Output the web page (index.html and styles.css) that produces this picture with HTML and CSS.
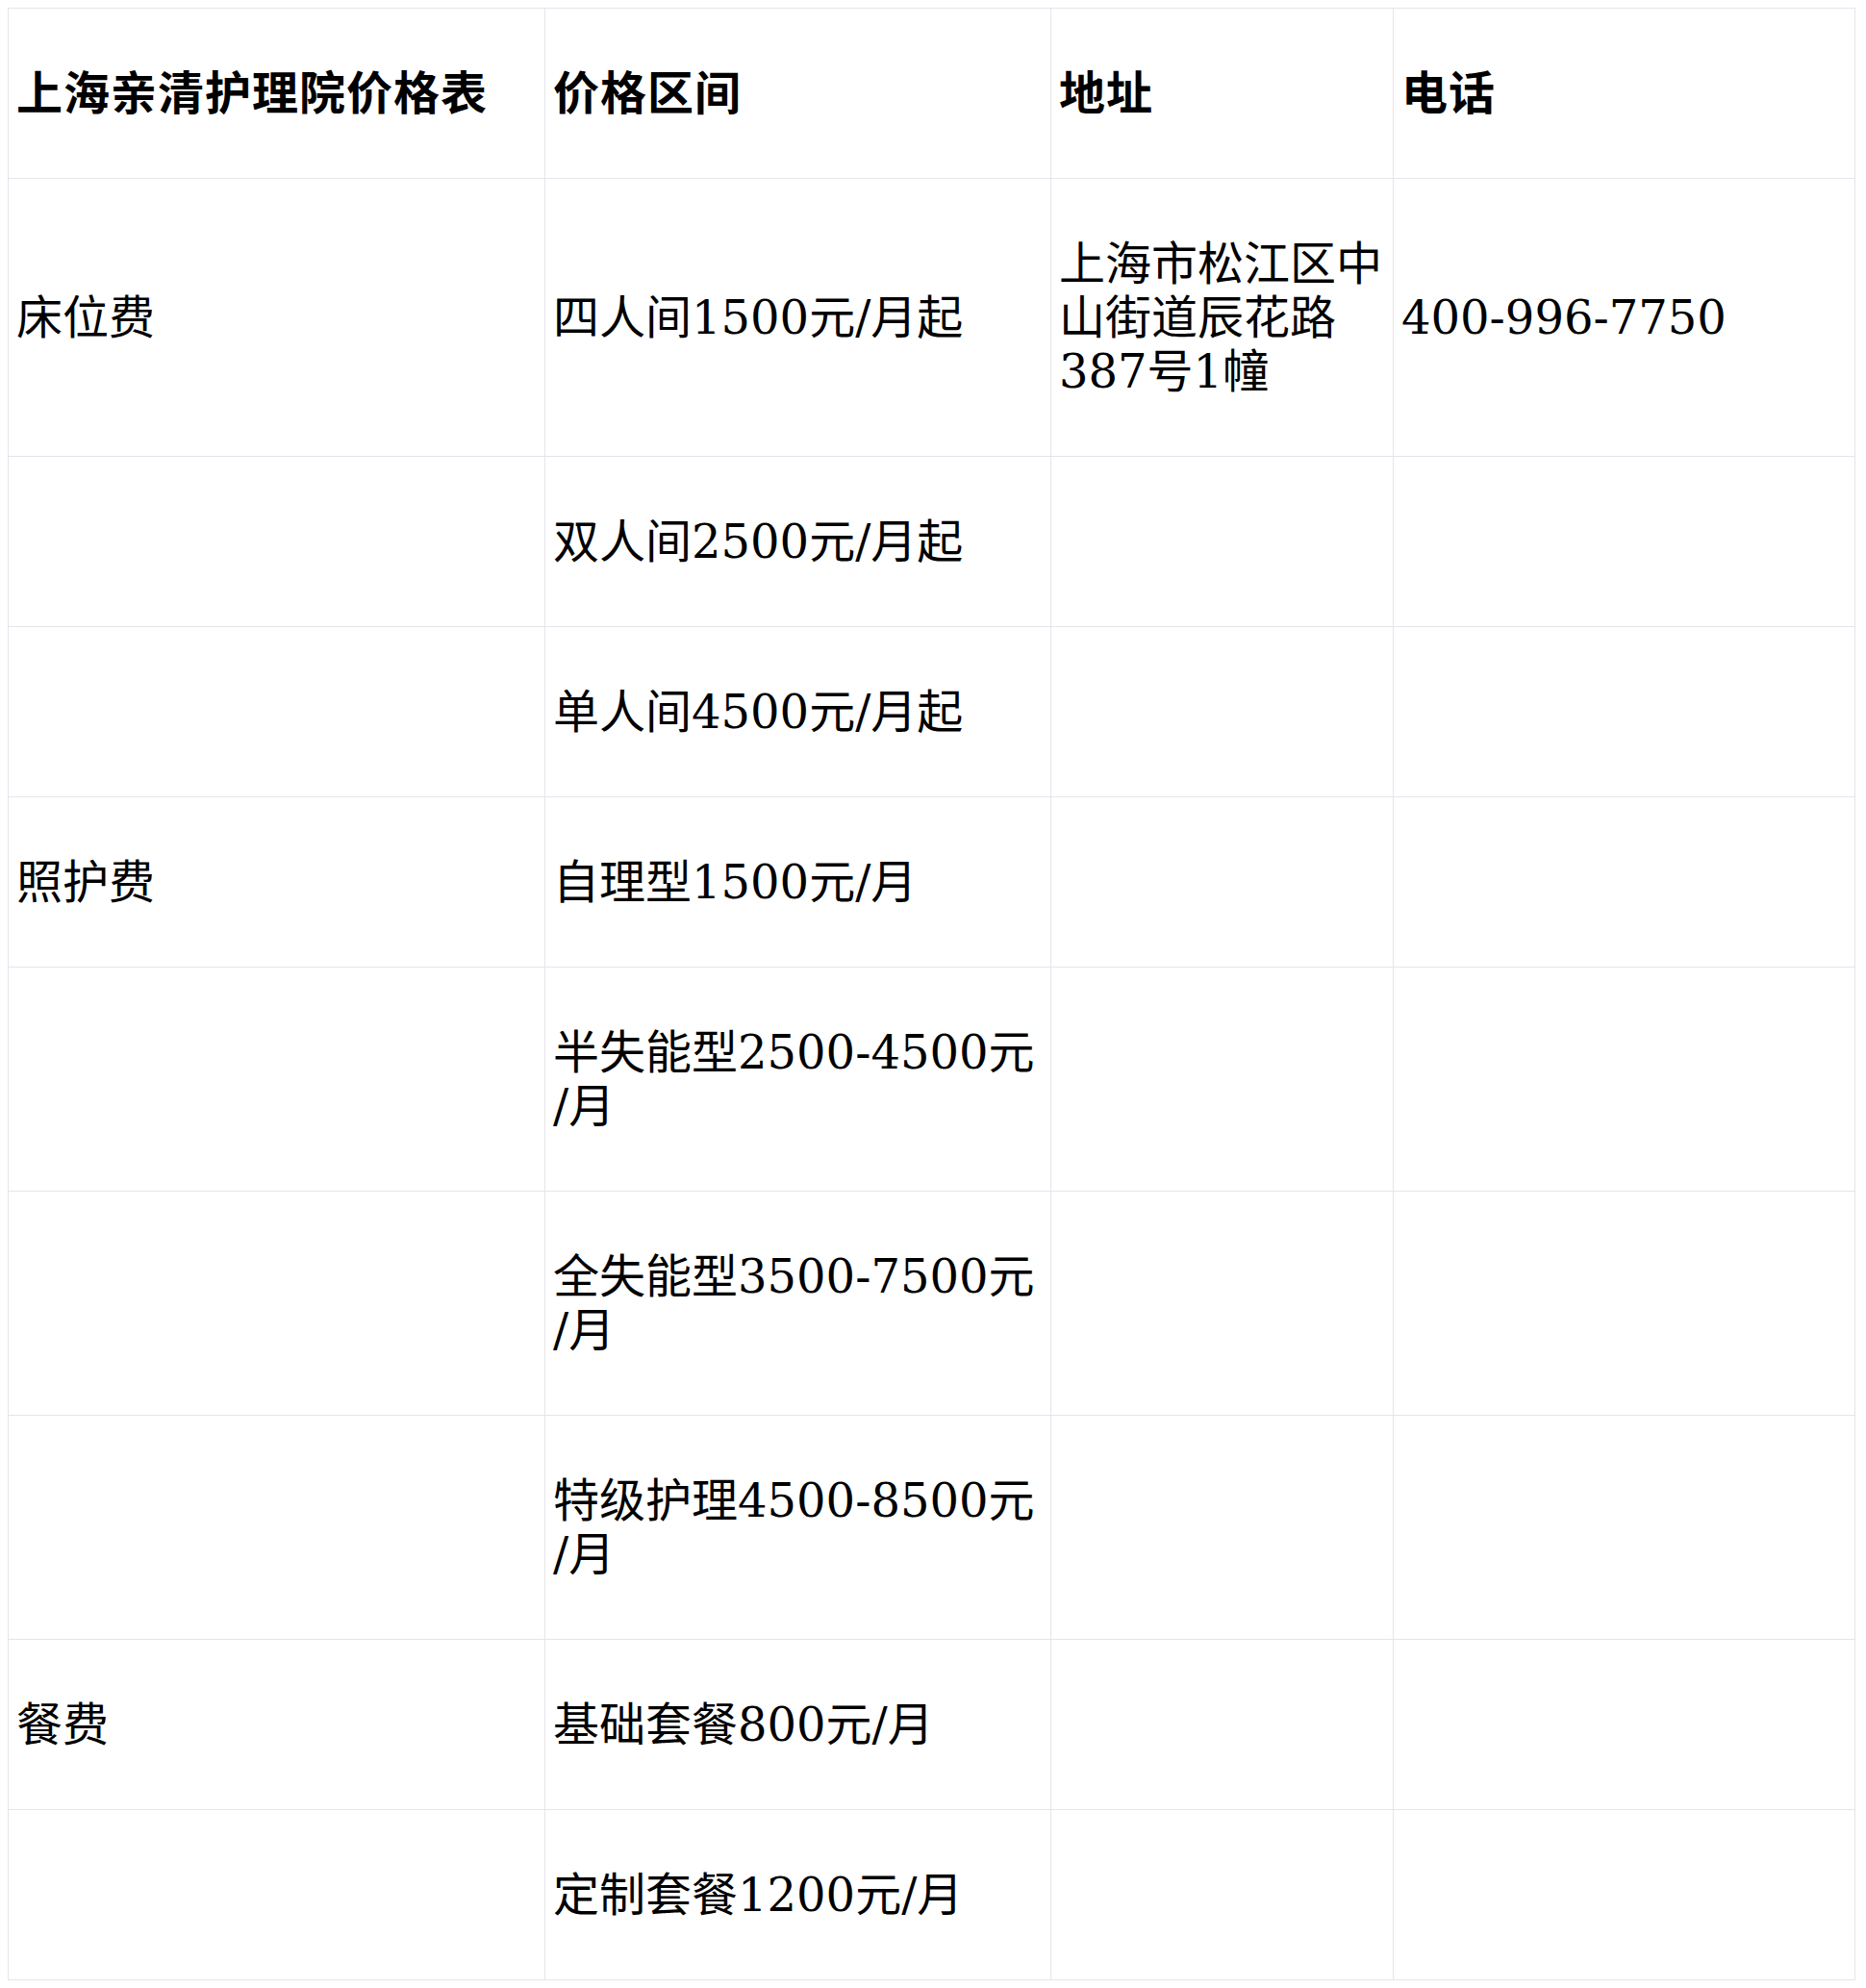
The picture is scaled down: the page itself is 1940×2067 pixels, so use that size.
FILE: index.html
```html
<!DOCTYPE html>
<html lang="zh-CN">
<head>
<meta charset="utf-8">
<title>上海亲清护理院价格表</title>
<link rel="stylesheet" href="styles.css">
</head>
<body>
<table class="price-table">
  <colgroup>
    <col class="c1">
    <col class="c2">
    <col class="c3">
    <col class="c4">
  </colgroup>
  <thead>
    <tr><th>上海亲清护理院价格表</th><th>价格区间</th><th>地址</th><th>电话</th></tr>
  </thead>
  <tbody>
    <tr><td>床位费</td><td class="range">四人间1500元/月起</td><td>上海市松江区中山街道辰花路387号1幢</td><td>400-996-7750</td></tr>
    <tr><td></td><td class="range">双人间2500元/月起</td><td></td><td></td></tr>
    <tr><td></td><td class="range">单人间4500元/月起</td><td></td><td></td></tr>
    <tr><td>照护费</td><td class="range">自理型1500元/月</td><td></td><td></td></tr>
    <tr><td></td><td class="range">半失能型2500-4500元/月</td><td></td><td></td></tr>
    <tr><td></td><td class="range">全失能型3500-7500元/月</td><td></td><td></td></tr>
    <tr><td></td><td class="range">特级护理4500-8500元/月</td><td></td><td></td></tr>
    <tr><td>餐费</td><td class="range">基础套餐800元/月</td><td></td><td></td></tr>
    <tr><td></td><td class="range">定制套餐1200元/月</td><td></td><td></td></tr>
  </tbody>
</table>
</body>
</html>
```
FILE: styles.css
```css
html, body {
  background: #ffffff;
}
body {
  margin: 8px;
  font-family: "DejaVu Serif", "Noto Sans CJK SC", serif;
  font-size: 48px;
  color: #000000;
}
.price-table {
  width: 1920px;
  border-collapse: collapse;
  table-layout: fixed;
}
.c1 { width: 558px; }
.c2 { width: 526px; }
.c3 { width: 356px; }
.c4 { width: 480px; }
.price-table th,
.price-table td {
  border: 1px solid #e4e5ec;
  padding: 60px 8px;
  line-height: 56px;
  text-align: left;
  vertical-align: middle;
}
.price-table th {
  font-weight: bold;
  letter-spacing: 1px;
}
.price-table .range {
  line-break: anywhere;
}
```
